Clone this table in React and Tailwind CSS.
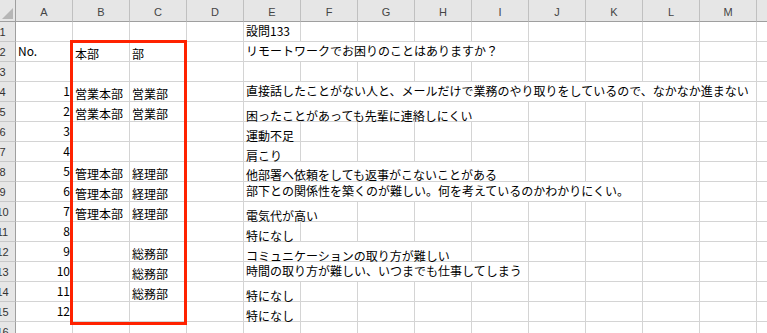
import React from "react";

const COLS = ["A", "B", "C", "D", "E", "F", "G", "H", "I", "J", "K", "L", "M"];

const SPAN = {
  1: "",
  2: "col-span-2",
  4: "col-span-4",
  5: "col-span-5",
  7: "col-span-7",
  9: "col-span-9",
};

const PT = {
  3: "pt-[3px]",
  6: "pt-[6px]",
  7: "pt-[7px]",
  8: "pt-[8px]",
};

const ROWS = [
  { n: 1, e: "設問133", span: 1, eOff: 3 },
  { n: 2, a: "No.", b: "本部", c: "部", e: "リモートワークでお困りのことはありますか？", span: 5, eOff: 3, soft: true },
  { n: 3 },
  { n: 4, num: "1", b: "営業本部", c: "営業部", e: "直接話したことがない人と、メールだけで業務のやり取りをしているので、なかなか進まない", span: 9, eOff: 3 },
  { n: 5, num: "2", b: "営業本部", c: "営業部", e: "困ったことがあっても先輩に連絡しにくい", span: 5, eOff: 8 },
  { n: 6, num: "3", e: "運動不足", span: 1, eOff: 8 },
  { n: 7, num: "4", e: "肩こり", span: 1, eOff: 8 },
  { n: 8, num: "5", b: "管理本部", c: "経理部", e: "他部署へ依頼をしても返事がこないことがある", span: 5, eOff: 7 },
  { n: 9, num: "6", b: "管理本部", c: "経理部", e: "部下との関係性を築くのが難しい。何を考えているのかわかりにくい。", span: 7, eOff: 3 },
  { n: 10, num: "7", b: "管理本部", c: "経理部", e: "電気代が高い", span: 2, eOff: 8 },
  { n: 11, num: "8", e: "特になし", span: 1, eOff: 8 },
  { n: 12, num: "9", c: "総務部", e: "コミュニケーションの取り方が難しい", span: 4, eOff: 8 },
  { n: 13, num: "10", c: "総務部", e: "時間の取り方が難しい、いつまでも仕事してしまう", span: 5, eOff: 3 },
  { n: 14, num: "11", c: "総務部", e: "特になし", span: 1, eOff: 8 },
  { n: 15, num: "12", e: "特になし", span: 1, eOff: 8 },
  { n: 16 },
];

const cellBase =
  "border-r border-b border-[#d4d4d4] bg-white whitespace-nowrap overflow-visible text-[12px] leading-[12px] font-['Noto_Sans_CJK_JP',sans-serif] text-black";

function RowHeader({ n }) {
  return (
    <div className="bg-[#e6e6e6] border-r border-b border-r-[#9f9f9f] border-b-[#c8c8c8] overflow-hidden flex items-center pt-[1px]">
      <div className="w-[5px] flex justify-center whitespace-nowrap text-[11px] leading-[12px] text-[#333333] font-['Liberation_Sans',sans-serif]">
        {n}
      </div>
    </div>
  );
}

function Row({ r }) {
  const cells = [];
  cells.push(<RowHeader key="h" n={r.n} />);
  cells.push(
    <div key="A" className={`${cellBase} ${r.num ? "flex justify-end pr-[2px] pt-[3px] text-[#1c1c1c]" : "pl-[2px] pt-[3px] text-[#3a4660]"}`}>
      {r.num || r.a || ""}
    </div>
  );
  cells.push(
    <div key="B" className={`${cellBase} pl-[2px] pt-[6px]`}>
      {r.b || ""}
    </div>
  );
  cells.push(
    <div key="C" className={`${cellBase} pl-[2px] pt-[6px]`}>
      {r.c || ""}
    </div>
  );
  cells.push(<div key="D" className={cellBase}></div>);
  const span = r.e ? r.span : 1;
  cells.push(
    <div
      key="E"
      className={`${cellBase} ${SPAN[span]} pl-[2px] ${PT[r.eOff || 3]} ${r.soft ? "text-[#3a4660]" : ""}`}
    >
      {r.e || ""}
    </div>
  );
  const used = 4 + span;
  for (let i = used; i < 13; i++) {
    cells.push(<div key={COLS[i]} className={cellBase}></div>);
  }
  cells.push(<div key="N" className="border-b border-[#d4d4d4] bg-white"></div>);
  return <>{cells}</>;
}

export default function App() {
  return (
    <div className="w-[767px] h-[333px] overflow-hidden bg-white relative">
      <div className="grid grid-cols-[16px_repeat(13,57px)_10px] grid-rows-[22px] auto-rows-[20px]">
        <div className="bg-[#e6e6e6] border-r border-b border-r-[#9f9f9f] border-b-[#9f9f9f] flex items-end justify-end pr-[1px] pb-[1px]">
          <svg width="12" height="12" viewBox="0 0 12 12">
            <polygon points="0,11 11,11 11,0" fill="#b6b6b6" />
          </svg>
        </div>
        {COLS.map((c) => (
          <div
            key={c}
            className="bg-[#e6e6e6] border-r border-b border-r-[#c0c0c0] border-b-[#9f9f9f] flex items-center justify-center pt-[2px] text-[11px] leading-[12px] text-[#444444] font-['Liberation_Sans',sans-serif]"
          >
            {c}
          </div>
        ))}
        <div className="bg-[#e6e6e6] border-b border-b-[#9f9f9f]"></div>
        {ROWS.map((r) => (
          <Row key={r.n} r={r} />
        ))}
      </div>
      <div className="absolute left-[70px] top-[40px] w-[117px] h-[285px] border-[3px] border-[#ff2200]"></div>
    </div>
  );
}
